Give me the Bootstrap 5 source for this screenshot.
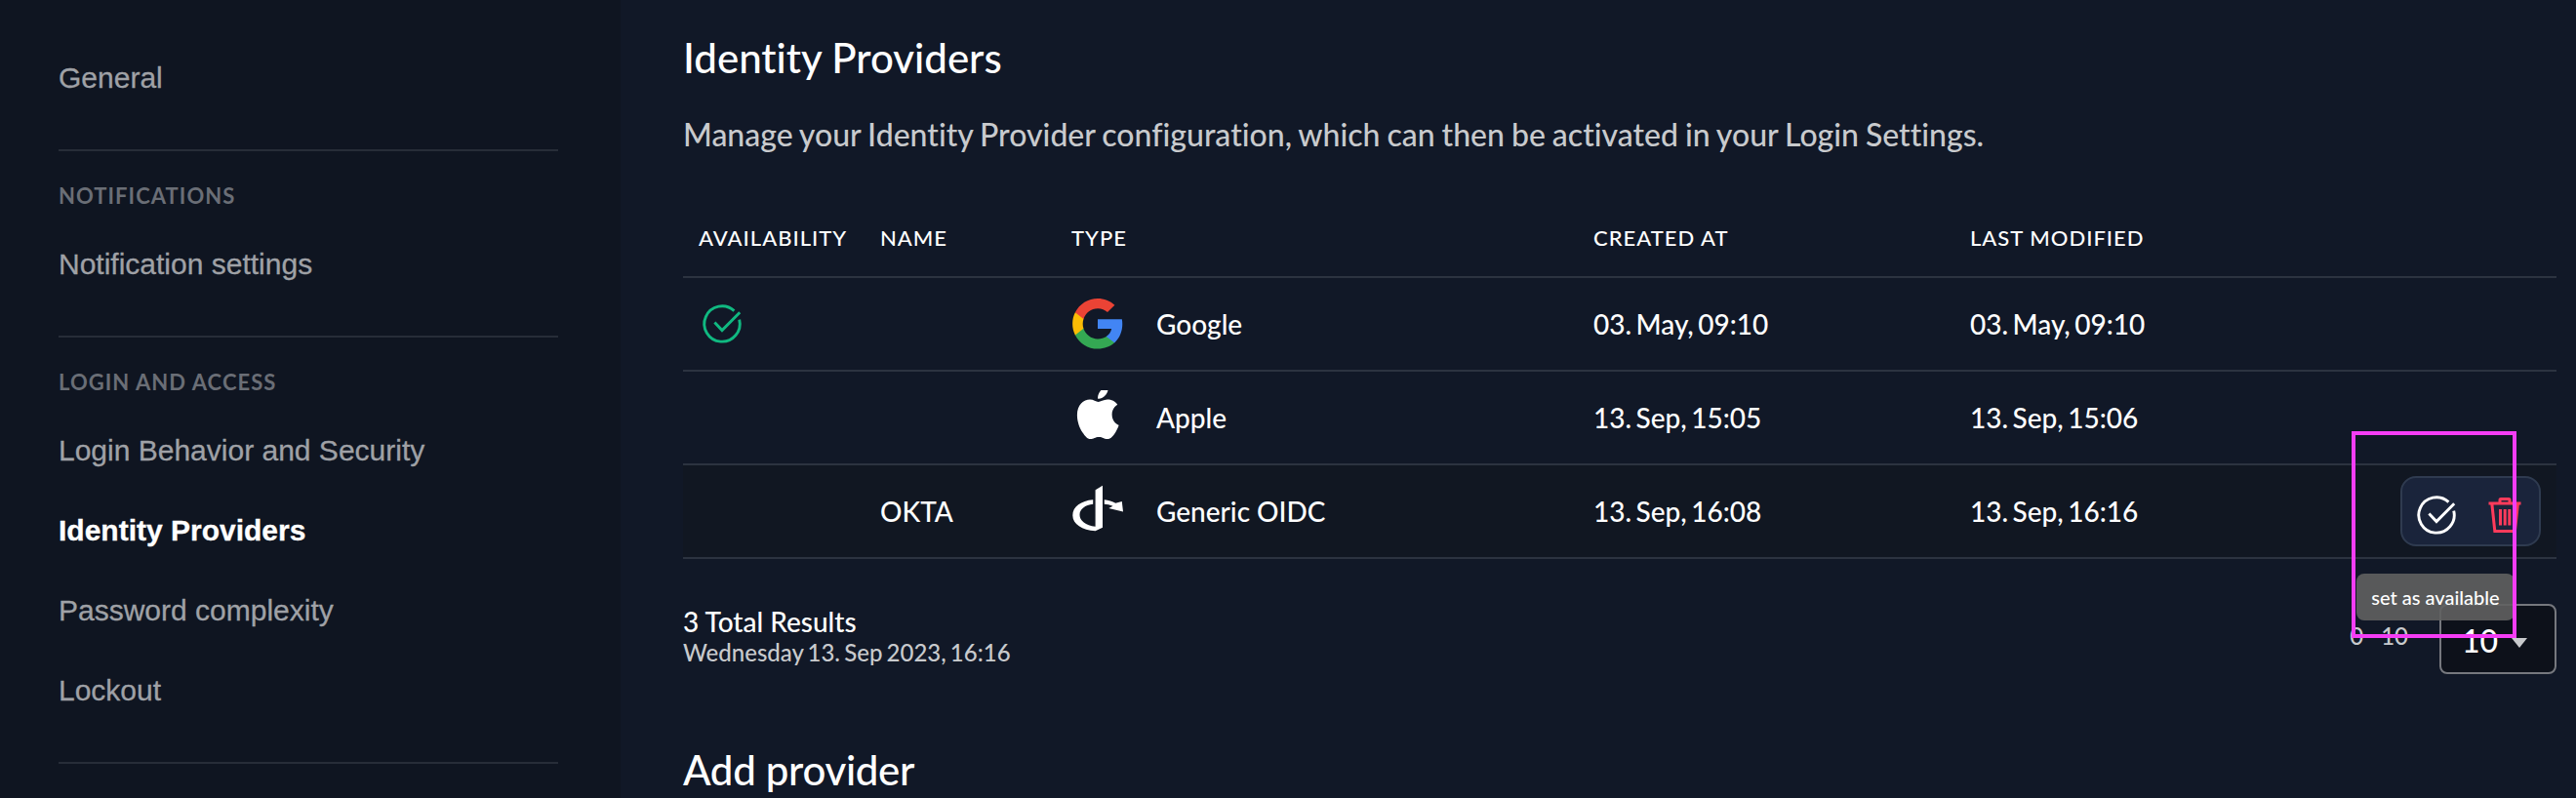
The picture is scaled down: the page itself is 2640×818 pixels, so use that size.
<!DOCTYPE html>
<html lang="en">
<head>
<meta charset="utf-8">
<title>Identity Providers</title>
<link href="https://cdn.jsdelivr.net/npm/bootstrap@5.3.0/dist/css/bootstrap.min.css" rel="stylesheet">
<style>
  body { background: #111827; color: #fff; font-family: Lato, sans-serif; font-size: 28px; font-weight: 500; height: 818px; overflow: hidden; font-variant-ligatures: none; }
  .sidebar { width: 636px; height: 818px; padding: 39px 64px 0 60px; background: #0f1521; }
  .side-link { font: 400 30px/82px "Liberation Sans", sans-serif; height: 82px; padding: 0; color: #9fa1a6; -webkit-text-stroke: .3px; }
  .side-link.active { color: #fff; font-weight: 700; }
  .side-group { border-top: 2px solid #272d38; margin-top: 32px; }
  .side-title { font-size: 22px; font-weight: 700; line-height: 35px; letter-spacing: 1.05px; color: #6a6e76; padding: 28px 0 12px; margin: 0; }
  .content { padding: 34px 20px 0 64px; height: 818px; }
  .page-title { font-size: 42px; line-height: 50px; font-weight: 500; margin: 0; }
  .add-title { margin-top: 73px; letter-spacing: -.3px; }
  .desc { font-size: 32px; line-height: 48px; margin: 30px 0 43px; color: #c8cacd; word-spacing: -1.1px; }
  .idp { table-layout: fixed; width: 1920px; margin: 0; --bs-table-bg: transparent; --bs-table-color: #fff; color: #fff; border-color: #2c3340; }
  .idp th { font-size: 22px; font-weight: 500; letter-spacing: 1px; line-height: 34px; height: 79px; }
  .idp th, .idp td { padding: 0 16px; vertical-align: middle; border-bottom: 2px solid #2c3340; }
  .idp td { height: 96px; line-height: 34px; }
  .idp tr.hovered td { background: #111722; }
  .date { word-spacing: -2.6px; }
  .type-icon { width: 56px; height: 56px; margin-right: 31px; }
  .pill { width: 144px; height: 72px; border: 2px solid #2f3b50; border-radius: 16px; background: #1a243b; }
  .pill svg { display: block; }
  .foot { margin-top: 46px; height: 72px; }
  .foot-left { line-height: 32px; padding-top: 2px; }
  .stamp { font-size: 24px; color: #c8cacd; word-spacing: -1.9px; }
  .range { font-size: 24px; line-height: 66px; color: #c8cacd; margin-right: 32px; word-spacing: -1.5px; }
  .page-size { width: 120px; height: 72px; border: 2px solid #76787e; border-radius: 8px; background: #0d111a; font-size: 32px; padding: 3px 28px 0 21px; }
  .caret { width: 0; height: 0; margin-top: 4px; border: 8.5px solid transparent; border-top: 10px solid #c8cacd; border-bottom: 0; }
  .tip { left: 2415px; top: 588px; width: 162px; height: 48px; border-radius: 8px; background: rgba(97,97,97,.9); font-size: 20px; line-height: 48px; }
  .marker { left: 2410px; top: 442px; width: 169px; height: 212px; border: 4px solid #f53df5; }
</style>
</head>
<body>
<div class="d-flex position-relative">
  <nav class="sidebar flex-shrink-0">
    <div class="nav flex-column">
      <a class="nav-link side-link">General</a>
    </div>
    <div class="side-group">
      <h6 class="side-title">NOTIFICATIONS</h6>
      <div class="nav flex-column"><a class="nav-link side-link">Notification settings</a></div>
    </div>
    <div class="side-group">
      <h6 class="side-title">LOGIN AND ACCESS</h6>
      <div class="nav flex-column">
        <a class="nav-link side-link">Login Behavior and Security</a>
        <a class="nav-link side-link active">Identity Providers</a>
        <a class="nav-link side-link">Password complexity</a>
        <a class="nav-link side-link">Lockout</a>
      </div>
    </div>
    <div class="side-group"></div>
  </nav>

  <main class="content flex-grow-1">
    <h2 class="page-title">Identity Providers</h2>
    <p class="desc">Manage your Identity Provider configuration, which can then be activated in your Login Settings.</p>

    <table class="table idp">
      <colgroup><col style="width:186px"><col style="width:196px"><col style="width:535px"><col style="width:386px"><col style="width:617px"></colgroup>
      <thead>
        <tr><th>AVAILABILITY</th><th>NAME</th><th>TYPE</th><th>CREATED AT</th><th>LAST MODIFIED</th></tr>
      </thead>
      <tbody>
        <tr>
          <td>
            <svg class="d-block" width="48" height="48" viewBox="-24 -24 48 48" fill="none" stroke="#10b981" stroke-width="2.9"><path d="M12.4-13.4A18.2 18.2 0 1 0 17.7-4.4M-7.6-1.6L0 6.6L18.2-11.8"/></svg>
          </td>
          <td></td>
          <td>
            <div class="d-flex align-items-center">
              <svg class="type-icon" viewBox="0 0 56 56"><g transform="translate(1.200 2) scale(1.075)"><path fill="#4285F4" d="M47.500 24.500c0-1.600-.1-3.200-.4-4.700H24v9.100h13.200c-.6 3-2.300 5.500-4.900 7.200v6h7.900c4.600-4.300 7.300-10.500 7.300-17.600z"/><path fill="#34A853" d="M24 48c6.500 0 11.900-2.100 15.900-5.800l-7.700-6c-2.200 1.400-4.900 2.300-8.200 2.300-6.300 0-11.600-4.200-13.500-9.900H2.500v6.200C6.500 42.600 14.600 48 24 48z"/><path fill="#FBBC05" d="M10.500 28.600c-1-2.900-1-6.200 0-9.100v-6.200H2.500c-3.400 6.700-3.400 14.700 0 21.500z"/><path fill="#EA4335" d="M24 9.500c3.400-.1 6.800 1.200 9.300 3.600l6.900-6.900C35.800 2.200 30 0 24 0 14.900 0 6.600 5.100 2.500 13.300l8 6.200C12.400 13.700 17.700 9.500 24 9.500z"/></g></svg>
              <span>Google</span>
            </div>
          </td>
          <td class="date">03. May, 09:10</td>
          <td class="date">03. May, 09:10</td>
        </tr>
        <tr>
          <td></td><td></td>
          <td>
            <div class="d-flex align-items-center">
              <svg class="type-icon" viewBox="0 0 56 56"><path fill="#fff" transform="translate(5.900 -3.500) scale(.0525 .0536)" d="M788.100 340.900c-5.800 4.500-108.200 62.200-108.200 190.500 0 148.400 130.300 200.900 134.200 202.200-.6 3.200-20.700 71.900-68.700 141.900-42.800 61.600-87.500 123.100-155.500 123.100s-85.500-39.500-164-39.500c-76.500 0-103.700 40.800-165.900 40.800s-105.600-57-155.500-127C46.700 790.700 0 663 0 541.800c0-194.400 126.400-297.500 250.800-297.500 66.100 0 121.200 43.400 162.700 43.400 39.500 0 101.100-46 176.300-46 28.500 0 130.900 2.600 198.300 99.200zm-234-181.500c31.100-36.900 53.100-88.100 53.100-139.300 0-7.100-.6-14.300-1.900-20.100-50.600 1.900-110.800 33.700-147.100 75.800-28.500 32.400-55.100 83.600-55.100 135.500 0 7.800 1.300 15.600 1.900 18.100 3.200.6 8.400 1.300 13.600 1.300 45.400 0 102.500-30.400 135.500-71.300z"/></svg>
              <span>Apple</span>
            </div>
          </td>
          <td class="date">13. Sep, 15:05</td>
          <td class="date">13. Sep, 15:06</td>
        </tr>
        <tr class="hovered">
          <td></td>
          <td>OKTA</td>
          <td>
            <div class="d-flex align-items-center">
              <svg class="type-icon" viewBox="0 0 56 56" fill="#fff"><path d="M24.600 4.500L32 0V43L24.600 46.500ZM22.200 14.500V19C14 20 8.500 24 8.500 30C8.500 36 14.500 40.800 24.600 42V46.500C11 45.800 1.300 39.500 1.300 30.500C1.300 21.500 10 15.500 22.200 14.500ZM33.800 14.500C38 14.900 42 16 45.300 18L51.800 16.300L53 26.600L38.300 23.300L42.500 21C39.500 19.600 36.600 19.200 33.800 19Z" transform="translate(0 1.800)"/></svg>
              <span>Generic OIDC</span>
            </div>
          </td>
          <td class="date">13. Sep, 16:08</td>
          <td>
            <div class="d-flex align-items-center justify-content-between">
              <span class="date">13. Sep, 16:16</span>
              <div class="pill">
                <svg width="140" height="68" viewBox="2462 490 140 68" fill="none"><g transform="translate(2497 528)"><path stroke="#fff" stroke-width="2.900" d="M12.400-13.400A18.200 18.200 0 1 0 17.700-4.400M-7.600-1.600L0 6.600L18.200-11.800"/></g><path stroke="#ff3b5b" stroke-width="3" d="M2550.500 516h33M2562 515v-2.500q0-1 1-1h8q1 0 1 1v2.500M2553.800 516l3 28.500h20.600l3-28.500"/><path stroke="#ff3b5b" stroke-width="3" d="M2562.500 522v16.500M2567.200 522v16.500M2571.800 522v16.500"/></svg>
              </div>
            </div>
          </td>
        </tr>
      </tbody>
    </table>

    <div class="foot d-flex">
      <div class="foot-left me-auto">
        <div>3 Total Results</div>
        <div class="stamp">Wednesday 13. Sep 2023, 16:16</div>
      </div>
      <div class="range">0 - 10</div>
      <div class="page-size d-flex align-items-center justify-content-between"><span>10</span><span class="caret"></span></div>
    </div>

    <h2 class="page-title add-title">Add provider</h2>
  </main>

  <div class="tip position-absolute text-center">set as available</div>
  <div class="marker position-absolute"></div>
</div>
<script src="https://cdn.jsdelivr.net/npm/bootstrap@5.3.0/dist/js/bootstrap.bundle.min.js"></script>
</body>
</html>
